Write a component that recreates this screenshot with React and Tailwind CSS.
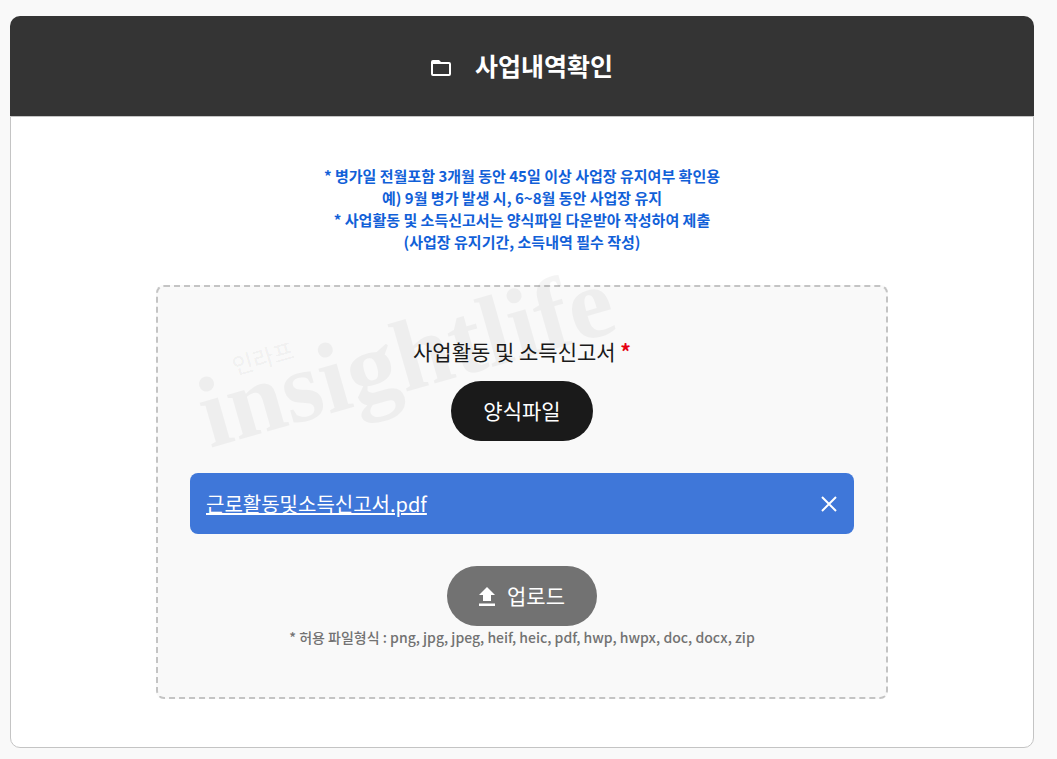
import React, { useState } from 'react';

const notices = [
  '* 병가일 전월포함 3개월 동안 45일 이상 사업장 유지여부 확인용',
  '예) 9월 병가 발생 시, 6~8월 동안 사업장 유지',
  '* 사업활동 및 소득신고서는 양식파일 다운받아 작성하여 제출',
  '(사업장 유지기간, 소득내역 필수 작성)',
];

const FolderIcon = () => (
  <svg viewBox="0 0 20 20" className="size-5" fill="currentColor" fillRule="evenodd" aria-hidden="true">
    <path d="M2 4h6l2 2h8a2 2 0 0 1 2 2v10a2 2 0 0 1-2 2H2a2 2 0 0 1-2-2V6a2 2 0 0 1 2-2zM2 8v10h16V8z" />
  </svg>
);

const UploadIcon = () => (
  <svg viewBox="0 0 16 19" className="h-[19px] w-4" fill="currentColor" aria-hidden="true">
    <path d="M8 0l8 8h-4v6H4V8H0zM0 16.5h16V19H0z" />
  </svg>
);

const CloseIcon = () => (
  <svg viewBox="0 0 16 16" className="size-4" fill="none" stroke="currentColor" strokeWidth="2" aria-hidden="true">
    <path d="M1 1l14 14M15 1L1 15" />
  </svg>
);

// --- WATERMARK ---
const Watermark = () => (
  <svg
    viewBox="0 0 440 200"
    className="pointer-events-none absolute -top-6 left-8 h-[200px] w-[440px] overflow-visible"
    fill="#000"
    fillOpacity="0.045"
    aria-hidden="true"
  >
    <g transform="translate(20 185) rotate(-16)">
      <text x="0" y="0" fontFamily="'Liberation Serif', serif" fontWeight="700" fontSize="101">insightlife</text>
      <text x="44" y="-63" fontFamily="'Noto Sans CJK KR', sans-serif" fontWeight="500" fontSize="23">인라프</text>
    </g>
  </svg>
);

const App = () => {
  const [files, setFiles] = useState(['근로활동및소득신고서.pdf']);

  const removeFile = (name) => setFiles(files.filter((f) => f !== name));

  return (
    <div className="min-h-screen bg-[#f9f9f9] pt-4 pr-[23px] pb-[11px] pl-2.5 font-['Noto_Sans_CJK_KR',sans-serif]">
      <header className="flex h-[100px] items-center justify-center gap-6 rounded-t-[10px] bg-[#343434] text-white">
        <FolderIcon />
        <h1 className="text-[25px] font-bold">사업내역확인</h1>
      </header>

      <main className="rounded-b-[10px] border border-[#c4c4c4] bg-white px-4 py-12">
        <div className="text-center text-[15px] leading-[22px] font-bold text-[#1160d8]">
          {notices.map((line) => (
            <p key={line}>{line}</p>
          ))}
        </div>

        <section className="relative mx-auto mt-8 flex max-w-[732px] flex-col items-center rounded-lg border-2 border-dashed border-[#c4c4c4] bg-[#f9f9f9] px-8 py-12">
          <Watermark />

          <h2 className="text-[21px] leading-8 text-[#1a1a1a]">
            사업활동 및 소득신고서 <span className="font-bold text-[#e60012]">*</span>
          </h2>
          <button type="button" className="mt-3.5 h-[60px] rounded-full bg-[#1a1a1a] px-8 text-[21px] text-white">
            양식파일
          </button>

          <ul className="mt-8 w-full">
            {files.map((name) => (
              <li key={name} className="flex h-[61px] items-center justify-between rounded-lg bg-[#3f77d9] px-4 text-white">
                <a href="#file" className="text-[20px] underline">{name}</a>
                <button type="button" aria-label="삭제" onClick={() => removeFile(name)} className="pr-[1px]">
                  <CloseIcon />
                </button>
              </li>
            ))}
          </ul>

          <button type="button" className="mt-8 flex h-[60px] items-center gap-3 rounded-full bg-[#727272] px-8 text-[21px] text-white">
            <UploadIcon />
            업로드
          </button>
          <p className="text-center text-[14px] leading-[23px] font-medium text-[#727272]">
            * 허용 파일형식 : png, jpg, jpeg, heif, heic, pdf, hwp, hwpx, doc, docx, zip
          </p>
        </section>
      </main>
    </div>
  );
};

export default App;
